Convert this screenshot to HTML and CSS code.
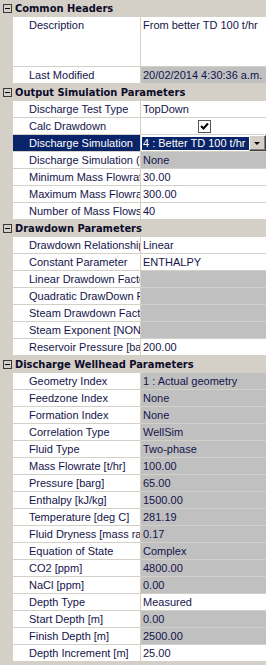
FILE: index.html
```html
<!DOCTYPE html>
<html lang="en">
<head>
  <meta charset="UTF-8" />
  <title>Discharge Properties</title>
  <link rel="stylesheet" href="styles.css">
</head>
<body>

  <div class="grid">
    <!-- Common Headers -->
    <div class="cat"><span class="toggle"></span>Common Headers</div>
    <div class="row tall"><div class="label">Description</div><div class="value">From better TD 100 t/hr</div></div>
    <div class="row"><div class="label">Last Modified</div><div class="value ro">20/02/2014 4:30:36 a.m.</div></div>

    <!-- Output Simulation Parameters -->
    <div class="cat"><span class="toggle"></span>Output Simulation Parameters</div>
    <div class="row"><div class="label">Discharge Test Type</div><div class="value">TopDown</div></div>
    <div class="row"><div class="label">Calc Drawdown</div><div class="value check-cell"><span class="check"><svg width="11" height="11" viewBox="0 0 11 11"><path d="M2 5 L4.5 7.5 L9 2.5" fill="none" stroke="#000" stroke-width="2"/></svg></span></div></div>
    <div class="row selected"><div class="label">Discharge Simulation</div><div class="value editing"><span class="edit">4 : Better TD 100 t/hr</span><span class="drop"></span></div></div>
    <div class="row"><div class="label">Discharge Simulation (Output)</div><div class="value ro">None</div></div>
    <div class="row"><div class="label">Minimum Mass Flowrate</div><div class="value">30.00</div></div>
    <div class="row"><div class="label">Maximum Mass Flowrate</div><div class="value">300.00</div></div>
    <div class="row"><div class="label">Number of Mass Flows</div><div class="value">40</div></div>

    <!-- Drawdown Parameters -->
    <div class="cat"><span class="toggle"></span>Drawdown Parameters</div>
    <div class="row"><div class="label">Drawdown Relationship</div><div class="value">Linear</div></div>
    <div class="row"><div class="label">Constant Parameter</div><div class="value">ENTHALPY</div></div>
    <div class="row"><div class="label">Linear Drawdown Factor</div><div class="value ro"></div></div>
    <div class="row"><div class="label">Quadratic DrawDown Factor</div><div class="value ro"></div></div>
    <div class="row"><div class="label">Steam Drawdown Factor</div><div class="value ro"></div></div>
    <div class="row"><div class="label">Steam Exponent [NONE]</div><div class="value ro"></div></div>
    <div class="row"><div class="label">Reservoir Pressure [barg]</div><div class="value">200.00</div></div>

    <!-- Discharge Wellhead Parameters -->
    <div class="cat"><span class="toggle"></span>Discharge Wellhead Parameters</div>
    <div class="row"><div class="label">Geometry Index</div><div class="value ro">1 : Actual geometry</div></div>
    <div class="row"><div class="label">Feedzone Index</div><div class="value ro">None</div></div>
    <div class="row"><div class="label">Formation Index</div><div class="value ro">None</div></div>
    <div class="row"><div class="label">Correlation Type</div><div class="value ro">WellSim</div></div>
    <div class="row"><div class="label">Fluid Type</div><div class="value ro">Two-phase</div></div>
    <div class="row"><div class="label">Mass Flowrate [t/hr]</div><div class="value ro">100.00</div></div>
    <div class="row"><div class="label">Pressure [barg]</div><div class="value ro">65.00</div></div>
    <div class="row"><div class="label">Enthalpy [kJ/kg]</div><div class="value ro">1500.00</div></div>
    <div class="row"><div class="label">Temperature [deg C]</div><div class="value ro">281.19</div></div>
    <div class="row"><div class="label">Fluid Dryness [mass ratio]</div><div class="value ro">0.17</div></div>
    <div class="row"><div class="label">Equation of State</div><div class="value ro">Complex</div></div>
    <div class="row"><div class="label">CO2 [ppm]</div><div class="value ro">4800.00</div></div>
    <div class="row"><div class="label">NaCl [ppm]</div><div class="value ro">0.00</div></div>
    <div class="row"><div class="label">Depth Type</div><div class="value">Measured</div></div>
    <div class="row"><div class="label">Start Depth [m]</div><div class="value ro">0.00</div></div>
    <div class="row"><div class="label">Finish Depth [m]</div><div class="value ro">2500.00</div></div>
    <div class="row"><div class="label">Depth Increment [m]</div><div class="value">25.00</div></div>
  </div>

</body>
</html>
```

FILE: styles.css
```css
* { box-sizing: border-box; margin: 0; padding: 0; }
body {
  font-family: 'Liberation Sans', Arial, sans-serif;
  font-size: 11px;
  color: #14144a;
  background: #d4d0c8;
  width: 266px;
  height: 665px;
  overflow: hidden;
}
.grid { background: #d4d0c8; }

.cat {
  display: flex;
  align-items: center;
  height: 17px;
  padding-bottom: 1px;
  font-family: 'DejaVu Sans Condensed', 'Liberation Sans', sans-serif;
  font-stretch: condensed;
  font-weight: bold;
  font-size: 11px;
  color: #0c0c28;
  white-space: nowrap;
  overflow: hidden;
}
.toggle {
  position: relative;
  width: 9px;
  height: 9px;
  margin: 0 3px 0 3px;
  border: 1px solid #3a3a3a;
  flex-shrink: 0;
}
.toggle::after {
  content: "";
  position: absolute;
  left: 1px;
  top: 3px;
  width: 5px;
  height: 1px;
  background: #000;
}

.row {
  display: grid;
  grid-template-columns: 127px 1fr;
  margin-left: 13px;
  height: 17px;
  border-bottom: 1px solid #d4d0c8;
  line-height: 16px;
}
.row.tall { height: 50px; }
.label {
  background: #fff;
  padding-left: 16px;
  white-space: nowrap;
  overflow: hidden;
}
.value {
  background: #fff;
  border-left: 1px solid #d4d0c8;
  padding-left: 2px;
  white-space: nowrap;
  overflow: hidden;
}
.value.ro { background: #c0c0c0; }

.selected .label { background: #0a246a; color: #fff; }
.editing {
  display: flex;
  padding-left: 1px;
}
.edit {
  flex: 1;
  margin-top: 2px;
  height: 13px;
  line-height: 13px;
  padding-left: 1px;
  background: #0a246a;
  color: #fff;
  overflow: hidden;
}
.drop {
  position: relative;
  width: 17px;
  height: 16px;
  background: #d4d0c8;
  border-top: 1px solid #fff;
  border-left: 1px solid #fff;
  border-right: 1px solid #404040;
  border-bottom: 1px solid #404040;
  box-shadow: inset -1px -1px 0 #808080;
  flex-shrink: 0;
}
.drop::after {
  content: "";
  position: absolute;
  left: 4px;
  top: 6px;
  border-left: 3px solid transparent;
  border-right: 3px solid transparent;
  border-top: 3px solid #000;
}

.check-cell {
  display: flex;
  justify-content: center;
  align-items: center;
}
.check {
  display: flex;
  align-items: center;
  justify-content: center;
  width: 13px;
  height: 13px;
  border: 1px solid #555;
  background: #fff;
}
```
